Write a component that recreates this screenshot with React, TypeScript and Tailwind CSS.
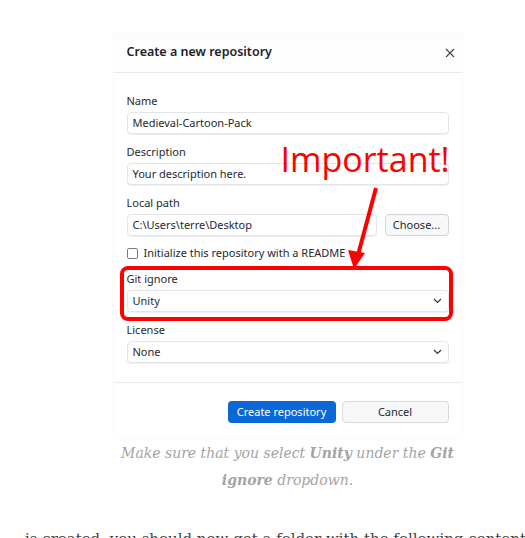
import React from "react";

const uiFont = { fontFamily: '"Noto Sans", "Open Sans", sans-serif' };

function Chevron() {
  return (
    <svg width="9" height="6" viewBox="0 0 9 6" className="shrink-0">
      <path d="M1 1l3.5 3.5L8 1" fill="none" stroke="#333" strokeWidth="1.2" />
    </svg>
  );
}

function Field({ label, value, select }: { label: string; value: string; select?: boolean }) {
  return (
    <div className="mt-[10px]">
      <div className="h-[16px] text-[11px] leading-[16px] text-[#24292f] mb-[3px]">{label}</div>
      <div className="h-[22px] rounded-[4px] border border-[#e3e5e8] bg-white flex items-center justify-between pl-[5px] pr-[6px] text-[11px] text-[#24292f] shadow-[0_1px_0_#eceef1]">
        <span>{value}</span>
        {select && <Chevron />}
      </div>
    </div>
  );
}

function Dialog() {
  return (
    <div className="w-[350px] bg-white border border-[#fafafa]" style={uiFont}>
      <div className="h-[40px] flex items-center justify-between pl-[13px] pr-[7px] border-b border-[#ebebeb] bg-[#fdfdfd]">
        <span className="text-[12.5px] font-semibold text-[#1f2328]">Create a new repository</span>
        <svg width="10" height="10" viewBox="0 0 10 10">
          <path d="M1 1l8 8M9 1l-8 8" stroke="#444" strokeWidth="1.1" />
        </svg>
      </div>
      <div className="px-[13px] pt-[10px] pb-[19px]">
        <Field label="Name" value="Medieval-Cartoon-Pack" />
        <Field label="Description" value="Your description here." />
        <div className="mt-[10px]">
          <div className="h-[16px] text-[11px] leading-[16px] text-[#24292f] mb-[3px]">Local path</div>
          <div className="flex gap-[8px]">
            <div className="flex-1 h-[22px] rounded-[4px] border border-[#e3e5e8] flex items-center pl-[5px] text-[11px] text-[#24292f] shadow-[0_1px_0_#eceef1]">
              C:\Users\terre\Desktop
            </div>
            <div className="w-[64px] h-[22px] rounded-[4px] border border-[#cfd4da] bg-[#f7f8fa] flex items-center justify-center text-[11px] text-[#24292f]">
              Choose...
            </div>
          </div>
        </div>
        <div className="mt-[9px] h-[16px] flex items-center gap-[6px]">
          <div className="w-[11px] h-[11px] rounded-[2px] border border-[#7a7a7a] bg-white" />
          <span className="text-[11px] text-[#24292f]">Initialize this repository with a README</span>
        </div>
        <Field label="Git ignore" value="Unity" select />
        <Field label="License" value="None" select />
      </div>
      <div className="border-t border-[#ebebeb] pt-[18px] pb-[15px] px-[13px] flex justify-end gap-[6px]">
        <div className="w-[108px] h-[22px] rounded-[4px] bg-[#0a68d6] text-white text-[11px] flex items-center justify-center">
          Create repository
        </div>
        <div className="w-[107px] h-[22px] rounded-[4px] border border-[#d6dae0] bg-[#f6f8fa] text-[#24292f] text-[11px] flex items-center justify-center">
          Cancel
        </div>
      </div>
    </div>
  );
}

export default function App() {
  return (
    <div className="w-[525px] h-[538px] overflow-hidden bg-white">
      <div className="ml-[25px] w-[525px]">
        <div className="relative mx-auto w-[350px] pt-[32px]">
          <Dialog />
          {/* annotation overlay */}
          <span
            className="absolute left-[168px] top-[142px] text-[34px] leading-none text-[#ff0000] whitespace-nowrap"
            style={{ fontFamily: '"Open Sans", "Noto Sans", sans-serif' }}
          >
            Important!
          </span>
          <svg className="absolute left-0 top-0 pointer-events-none" width="350" height="330" viewBox="112 0 350 330">
            <line x1="375" y1="188" x2="357" y2="255" stroke="#ff0000" strokeWidth="4" />
            <path d="M347 250L353 269L364 253Z" fill="#ff0000" />
            <rect x="121" y="268" width="329" height="51" rx="6" fill="none" stroke="#ff0000" strokeWidth="4" />
          </svg>
        </div>
        <p
          className="mx-auto w-[350px] text-center italic text-[14px] leading-[27px] text-[#a4a4a4] mt-[1px]"
          style={{ fontFamily: '"DejaVu Serif", serif' }}
        >
          Make sure that you select <b>Unity</b> under the <b>Git</b> <b>ignore</b> dropdown.
        </p>
        <p
          className="mt-[32px] text-[15px] leading-[27px] text-[#444] whitespace-nowrap"
          style={{ fontFamily: '"DejaVu Serif", serif' }}
        >
          is created, you should now get a folder with the following content:
        </p>
      </div>
    </div>
  );
}
